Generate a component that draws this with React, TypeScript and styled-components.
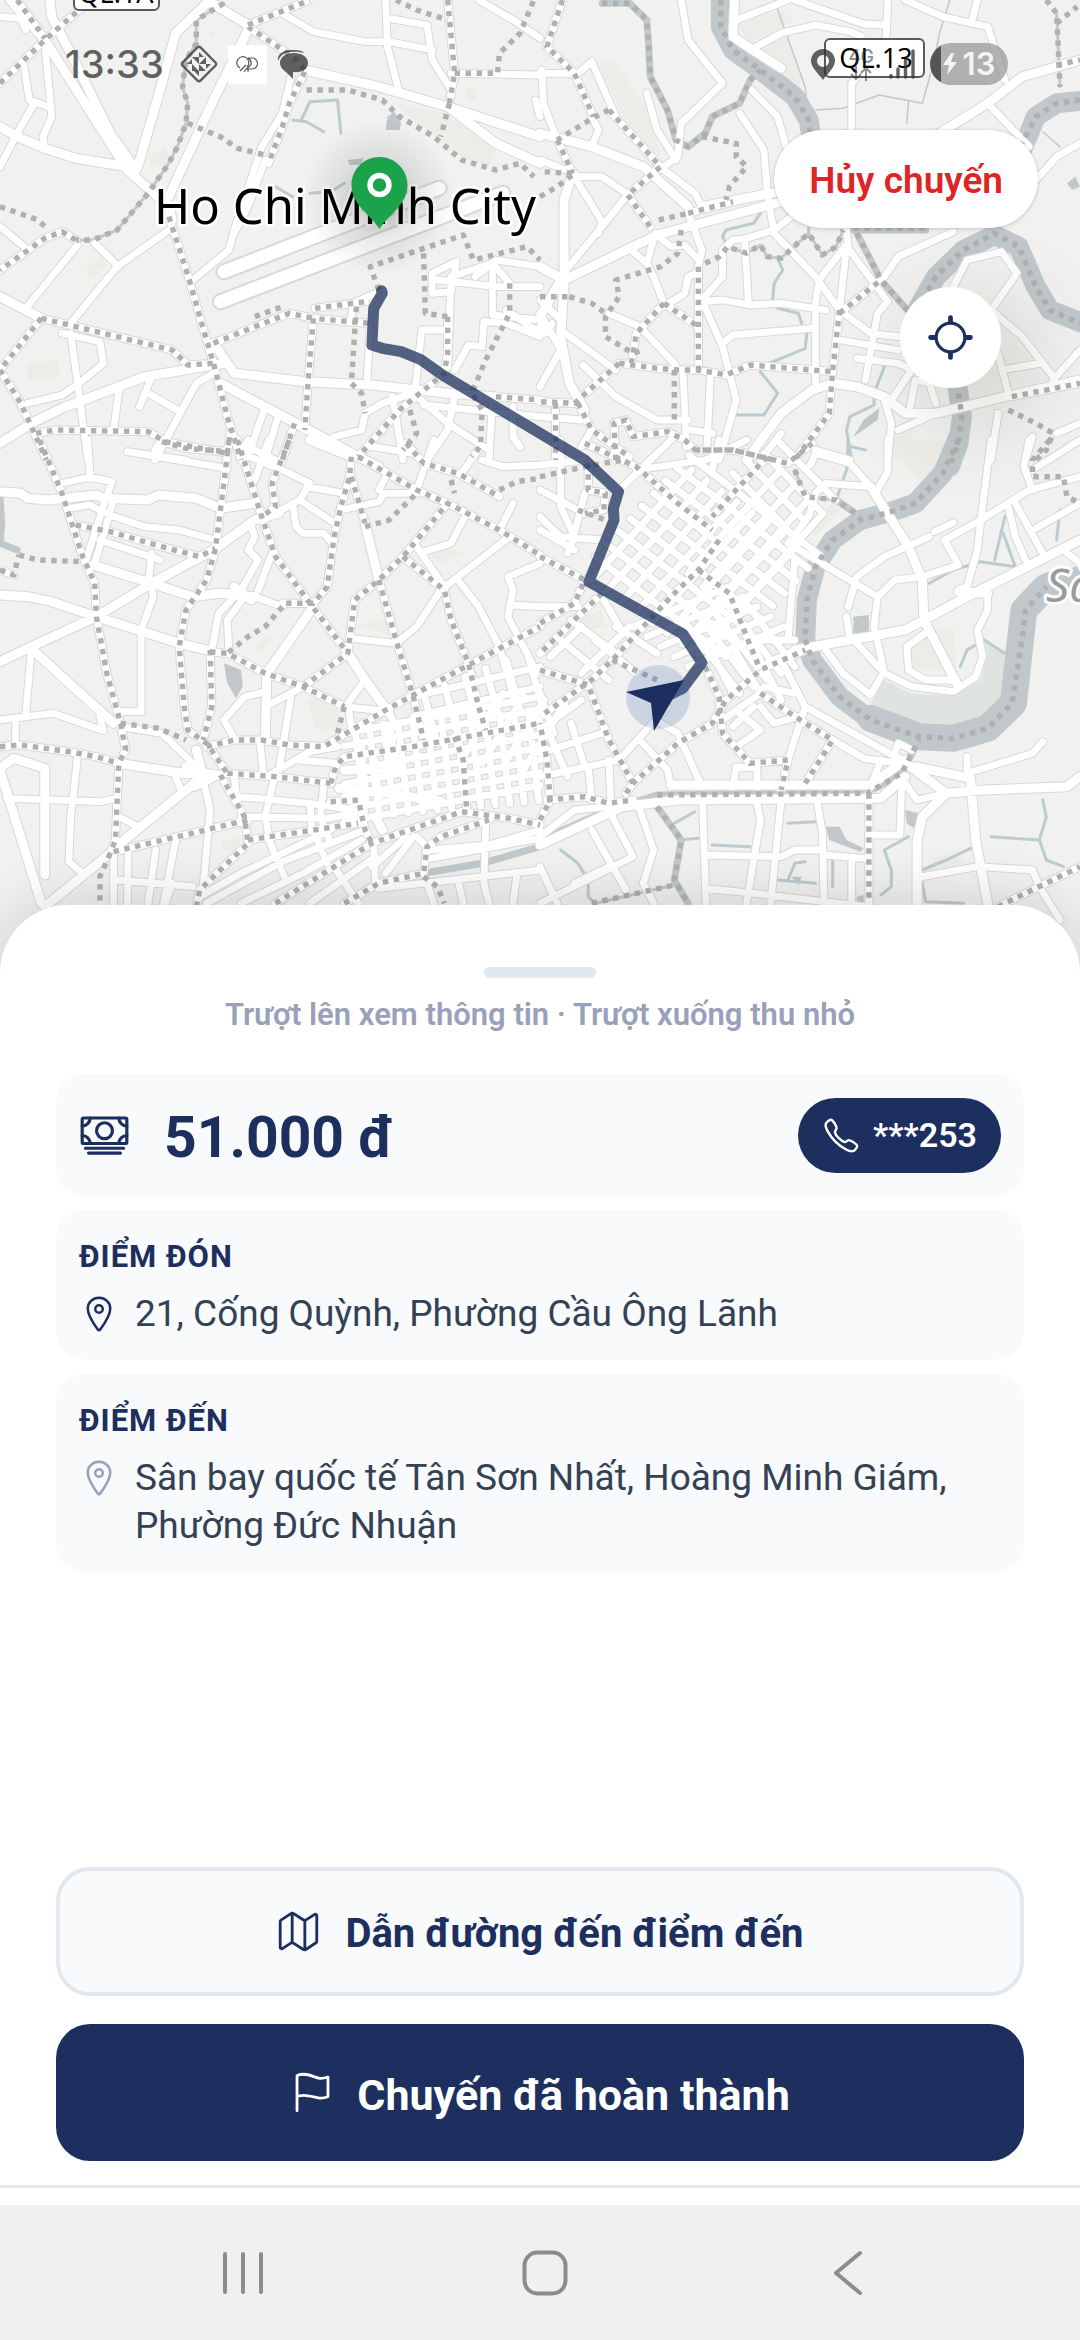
import React from "react";
import styled, { createGlobalStyle } from "styled-components";
import {
  IoCallOutline,
  IoCashOutline,
  IoFlagOutline,
  IoLocateOutline,
  IoLocationOutline,
  IoMapOutline,
} from "react-icons/io5";

const color = {
  navy: "#1c2f5e",
  text: "#334155",
  muted: "#98a1b9",
  card: "#f8fafc",
  line: "#e2e8f0",
  red: "#dc2626",
  green: "#1aa34a",
  water: "#c1c8cb",
  status: "rgba(48, 48, 48, 0.76)",
};

const GlobalStyle = createGlobalStyle`
  *, *::before, *::after { box-sizing: border-box; }
  body { margin: 0; background: #ffffff; font-family: Roboto, "Noto Sans", sans-serif; }
  button { font: inherit; border: 0; padding: 0; margin: 0; cursor: pointer; }
  h2, p { margin: 0; }
`;

/* ---------- map geometry ---------- */

type Tile = "nw" | "ne" | "sw" | "se";
const origin: Record<Tile, [number, number]> = {
  nw: [0, 0],
  ne: [540, 0],
  sw: [0, 440],
  se: [540, 440],
};
const SX = 540 / 1568;
const SY = 1 / 3;

/* Turns "x,y x,y; x,y x,y" in tile units into one SVG path in map units. */
function trace(tile: Tile, lines: string, close = false): string {
  const [ox, oy] = origin[tile];
  return lines
    .split(";")
    .map((line) => line.trim())
    .filter(Boolean)
    .map((line) => {
      const pts = line.split(/\s+/).map((p) => {
        const [x, y] = p.split(",").map(Number);
        return `${(ox + x * SX).toFixed(1)} ${(oy + y * SY).toFixed(1)}`;
      });
      return "M" + pts.join("L") + (close ? "Z" : "");
    })
    .join("");
}

/* Street blocks: two families of parallel lines. */
function comb(x: number, y: number, stepX: number, stepY: number, n: number, dx: number, dy: number): string {
  return Array.from({ length: n }, (_, i) => {
    const ax = x + stepX * i;
    const ay = y + stepY * i;
    return `${ax},${ay} ${ax + dx},${ay + dy}`;
  }).join(";");
}

const streets =
  trace("nw", `
  845,230 820,340 760,440 680,690 665,750 560,840; 770,480 720,620 680,700; 1120,0 1125,140 1160,280; 820,40 910,95 1060,125 1130,125 1255,150;
  1130,55 1240,75 1255,180 1310,270; 1390,0 1490,60 1568,115; 0,500 60,380 100,310; 70,200 85,300 140,320;
  130,130 150,350 125,410 130,445; 0,50 60,55 75,90; 490,690 340,800 205,970; 275,730 345,800; 225,735 75,925;
  0,680 70,740; 180,1000 290,1025 300,1090 230,1150 180,1185 80,1210; 205,1000 225,1150 255,1380;
  620,1120 570,1150 450,1380; 440,1130 405,1220; 430,1180 515,1230; 345,1170 330,1290; 370,1355 540,1380;
  1075,980 1065,1150; 1020,950 1025,910 1090,880; 770,1220 720,1370; 810,1240 770,1380; 1310,830 1300,1100; 1255,880 1310,875 1325,785 1255,820 1255,880;
  1270,840 1440,860 1568,860; 1325,825 1430,790 1480,850; 1380,830 1440,780 1568,800; 1430,800 1430,945 1568,960; 1225,990 1305,990; 1225,990 1205,1170;
  1320,1110 1360,1035 1400,1040 1405,965 1470,970 1568,1010; 1470,930 1568,1000; 1200,1180 1300,1270 1420,1350; 1140,1190 1170,1380;
  1200,1180 1110,1210 1060,1240 1050,1290 970,1310; 1320,1190 1300,1290 1240,1380; 1430,1200 1420,1380; 1490,1220 1490,1310 1510,1340; 1230,1215 1568,1250;
  1310,220 1568,225; 1555,300 1568,350; 1080,1340 1200,1360; 720,1340 800,1380`) +
  trace("ne", `
  410,0 430,120 530,250 450,330 410,370 400,470 345,510; 570,60 720,0; 740,0 940,72 1005,75; 1010,0 1005,112;
  610,150 700,100 800,75 900,95 935,110; 1060,0 1170,50 1300,80 1350,240; 1270,0 1255,60; 905,390 905,250 935,215;
  1300,310 1420,440; 1440,540 1500,470 1568,430; 310,280 340,390 395,480; 615,270 690,350 715,440; 580,340 650,450 660,580 680,700 800,830 870,930 960,1000 1040,1010;
  0,220 110,220 150,185 220,350; 5,210 10,310 50,420; 150,350 170,390 150,440; 340,510 250,590 180,680 75,810; 360,510 450,580 470,620; 0,480 100,520;
  100,530 180,665 170,700; 100,530 180,530 250,580; 0,940 60,1050 0,1160; 60,990 220,1110; 265,750 310,790 330,830 360,910; 310,790 335,700; 345,710 380,740 420,735 460,780;
  430,640 470,750 460,800; 460,815 430,830 420,880 360,920; 200,940 290,980 390,1090 400,1110; 530,830 470,900; 595,730 605,910; 530,830 530,750 560,720 600,715 680,690 730,650;
  890,690 895,745 1010,905 980,940 945,1140; 885,740 810,840 800,910 800,1150; 890,740 870,930; 1000,830 1040,770 1200,695; 470,905 530,900 610,915 700,910 830,930;
  470,900 530,1040 570,1200 520,1380; 530,1030 560,1005 790,985; 125,1095 220,1190 340,1260 430,1260; 415,1110 425,1340; 495,1120 485,1340; 440,1290 500,1300;
  870,1020 1040,1050; 920,1075 1040,1090 1080,1110 1020,1200; 1075,1220 1090,1140 1130,1150 1150,1210; 1000,1200 1020,1270 1010,1380; 1150,1240 1040,1290;
  1200,860 1240,780 1340,755 1385,820 1310,930; 1310,930 1400,1010 1490,1130; 1340,1110 1450,1090; 1490,1140 1568,1050; 1330,1060 1360,1180; 1330,1240 1310,1380;
  1500,1300 1568,1270; 1430,1310 1410,1380; 0,1250 120,1260; 150,1290 120,1340; 0,900 60,960; 0,980 15,1000 35,970; 640,1380 700,1300; 800,1350 900,1380`) +
  trace("sw", `
  255,0 262,115; 180,130 260,112 325,125 300,200 250,360; 330,180 275,370; 200,205 260,195 320,225 420,260 520,270 625,300;
  290,300 465,360; 440,340 430,440; 440,440 445,470 410,570 410,815 350,815; 90,640 75,820; 0,840 155,820 300,872 290,830; 45,840 45,910;
  350,860 470,880 550,960 590,1020; 225,950 215,1050 205,1130 200,1265 240,1300; 20,1075 290,1085 340,1075; 345,1130 400,1160; 370,35 660,85; 450,30 470,0;
  730,260 740,290 720,330 750,360 700,450 635,520 615,630; 790,340 750,450; 710,470 660,540 665,640; 700,40 820,90 900,130 870,180 800,220; 780,0 740,120; 720,0 700,40;
  890,140 1000,160; 850,190 860,260 880,280 940,280 965,310; 870,180 980,255; 740,470 820,500; 770,755 710,770 650,840 680,895; 770,800 880,740; 845,770 810,990; 755,910 765,1010;
  790,1000 900,935 980,920; 870,960 980,970; 590,1020 610,1110 590,1340; 690,1070 900,1090 1030,1110; 700,1130 950,1135 1030,1120; 795,1020 770,1130 785,1210 830,1320; 900,1090 905,1160 950,1270;
  680,1010 690,1090; 940,1040 930,1130 960,1210; 510,1010 525,1050; 990,210 1100,185 1115,160 1210,160; 1100,150 1120,110; 1330,420 1390,500 1450,620 1500,800; 1480,290 1280,450 1210,560 1150,610 1020,595;
  1210,320 1290,440; 1230,335 1310,310 1350,230; 1260,0 1210,150; 1490,190 1450,270; 1400,60 1460,80 1568,75; 1395,20 1340,100; 1568,370 1475,410 1490,450 1475,530 1560,700; 1480,495 1568,500;
  600,1390 820,1265 1060,1170; 580,1370 700,1300 960,1170; 700,1390 880,1300 1050,1200; 900,1390 1090,1250; 340,1320 560,1340; 330,1250 330,1390; 372,1240 370,1390; 452,1230 430,1390; 510,1200 475,1390; 500,1330 480,1390;
  970,1280 1040,1390; 1085,1220 1090,1330; 1080,1280 1180,1190; 1210,1190 1250,1230 1420,1215 1568,1170; 1120,1300 1200,1190; 1250,1255 1568,1195; 1410,1160 1405,1330 1420,1390; 1100,1345 1568,1290; 1240,1330 1260,1390; 1330,1320 1345,1390; 1500,1310 1490,1390;
  1060,720 1010,790 1020,860; 1000,800 1130,815; 1130,820 1160,880`) +
  trace("sw", comb(1000, 880, 0, 38, 8, 568, -110)) +
  trace("sw", comb(1200, 770, 0, 60, 2, 368, -90)) +
  trace("sw", comb(1030, 860, 42, -4, 13, 30, 270)) +
  trace("sw", comb(1230, 760, 60, -25, 6, 40, 150)) +
  trace("sw", comb(1340, 960, 60, 10, 4, 120, -200)) +
  trace("se", `
  980,470 720,310 780,230 800,160 830,130 960,140; 960,140 900,70 800,40 785,75; 980,150 1010,95 1010,0; 895,500 920,410 1000,350 1130,290; 1145,275 1200,248;
  980,470 970,560 1000,700; 980,470 1030,420 1110,410 1215,375 1175,300 1280,240 1420,150 1568,110; 1310,0 1280,240 1270,330 1240,440 1215,450; 1360,200 1380,290 1410,360; 1380,190 1460,340; 1420,0 1405,80 1430,150;
  890,530 900,600; 830,630 880,700 960,765 990,710; 920,610 1000,700 1080,740 1200,755 1265,710 1285,650 1270,570 1300,510 1300,460; 1130,570 1065,620 1070,690 1120,720 1210,720; 1440,265 1568,190; 1430,90 1568,0; 1520,330 1568,370;
  700,660 770,800 1050,960; 770,800 720,960; 850,900 940,955 1050,970; 960,1040 990,960; 1050,1040 1045,1185 960,1185; 1060,1030 1095,1080 1180,1060; 1030,940 1040,910 1080,930;
  1240,950 1240,1000 1430,940 1460,905; 1110,1310 1270,1280 1430,1290 1450,1340 1510,1440; 472,1090 482,1390; 630,1090 640,1140 600,1390; 700,1080 670,1390; 805,1085 820,1180 825,1390; 905,1260 905,1390; 480,1245 700,1250 740,1230 820,1230 825,1245 940,1255;
  0,1390 60,1360 270,1250 210,1130; 150,1170 250,1350; 290,1110 330,1230 300,1330 330,1390; 0,1280 50,1390; 0,1190 100,1110 200,1100; 480,1345 620,1360 950,1400; 200,1280 100,1330;
  380,1040 370,990 290,900; 470,1040 400,880 350,850; 560,1040 570,980 630,985 630,1040; 230,960 370,800; 0,1010 230,960; 140,980 150,1080; 200,960 205,1070; 0,940 180,880; 0,870 120,780; 160,600 280,700; 30,890 80,1010; 90,850 130,980; 0,760 40,880;
  60,0 60,200 100,290 80,340; 0,75 130,60; 0,150 110,210; 0,230 60,290 180,300; 0,270 100,330; 280,90 480,60 600,0; 240,140 380,0; 520,0 500,90; 100,280 130,160; 0,500 110,500; 60,600 200,720; 30,650 120,560; 90,540 220,640; 180,470 230,560; 220,560 340,640; 120,700 260,560;
  640,680 720,640 770,620; 560,620 640,760; 600,580 700,780; 640,600 740,600; 500,640 560,760; 530,840 640,760; 560,860 620,800; 570,920 640,870; 640,870 580,820; 640,800 680,850 750,830; 650,740 740,760; 740,360 720,600`) +
  trace("se", comb(150, 420, 44, 32, 8, 290, -330)) +
  trace("se", comb(430, 400, 44, 40, 4, 260, -300)) +
  trace("se", comb(160, 350, 34, -38, 9, 380, 300)) +
  trace("se", comb(560, 100, 46, -30, 4, 160, 170)) +
  trace("se", comb(270, 560, 40, 30, 5, 280, -120)) +
  trace("se", comb(430, 560, 40, -20, 5, 150, 200));

const avenues =
  trace("nw", `
  30,0 130,120 370,510 490,620 500,660; 145,0 150,50 220,190 320,400 395,510; 610,0 510,100 470,250 400,500; 600,0 720,75; 720,90 620,300 490,590;
  885,210 1100,260 1300,320 1568,410; 1300,320 1440,430 1568,490; 0,380 50,410 130,445 220,475 370,500; 0,890 120,955; 0,1330 100,1265 180,1225 420,1130 650,1090;
  620,1030 680,1120 890,1145 1080,1155 1300,1180 1440,1190; 640,1150 860,1270 1040,1370 1100,1400`) +
  trace("ne", `
  565,0 560,110 610,145 700,205; 1160,400 1300,310 1400,230 1568,180; 0,400 150,440 300,500 430,620; 95,520 70,600 70,850 60,1010 85,1150 130,1230; 0,800 60,835;
  60,845 340,705 720,600; 470,620 720,570; 60,840 0,950; 600,1380 700,1240 790,1170 850,1150 920,1160 1000,1190 1060,1240 1150,1240 1350,1190 1568,1140`) +
  trace("sw", `
  0,155 60,160 80,175 140,180 280,165 300,175 430,180 460,165 570,175 640,205 740,190; 270,375 440,430 560,470 640,460 740,470; 0,665 90,620 280,530 440,430 620,330 740,240 810,220;
  0,465 80,470 150,485 280,530 520,610 600,630; 90,625 330,850; 345,970 530,1000 640,1005; 0,985 40,955 130,985 130,1305; 0,990 120,1390; 600,1000 350,1210; 320,1240 130,1400; 540,980 620,1010 560,1040; 570,930 590,1010;
  910,500 775,700 770,900; 1010,640 1060,720 1130,820; 1060,250 1100,420; 680,440 730,480; 1020,50 900,0;
  985,1045 1130,1060 1280,1085; 1045,910 1060,1080; 1085,960 1100,1090; 1000,990 1160,985; 1090,1130 1110,1170; 1130,870 1145,960`) +
  trace("se", `
  740,630 900,600 1060,570 1240,470 1568,300; 960,140 1070,320 1110,420 1115,540 1215,740; 380,1035 960,1035 1060,960; 0,1215 240,1100 400,1080 990,1075 1060,1010; 1050,960 1180,1060 1290,1050 1530,1040 1568,1010;
  1180,1060 1110,1130 1095,1200 1095,1390; 1090,980 1250,1015 1265,1200 1300,1390; 1215,455 1300,460`);

/* District boundaries that run along a street. */
const borderStreets =
  trace("nw", `
  50,0 130,115; 0,250 130,120 240,20; 720,80 850,170 885,210; 720,75 900,0; 885,215 840,310 820,380 780,490; 490,650 550,840 580,950 620,1090 660,1250 700,1380;
  220,720 180,695 130,715 0,810; 120,955 500,1050 545,1095 620,1090; 120,955 0,1110 60,1210 100,1300 135,1380; 105,1300 160,1290 430,1295 480,1325 660,1360; 620,1030 740,980 840,940 910,955;
  910,955 895,1140 885,1290; 855,1270 820,1380; 915,925 1060,905; 1300,0 1320,220 1305,310; 1440,1190 1568,1200; 1300,950 1300,1060 1290,1120 1160,1230 1040,1370; 660,1360 670,1290; 1070,970 910,955`) +
  trace("ne", `
  65,0 20,140 100,220 155,350; 200,330 350,500 255,585; 50,420 95,520; 460,800 460,1110; 870,940 990,840; 870,930 850,1110 840,1240 790,1310 740,1380; 230,1090 100,1210 0,1205; 230,1090 340,1105 400,1110 460,1110 540,1125 610,1095 850,1115;
  1370,1190 1568,1150; 220,1380 215,1270 250,1260 270,1310 370,1295 420,1320 450,1350 560,1350 680,1380; 45,1210 45,1380; 110,1210 150,1290 260,1370; 255,585 320,680; 360,910 280,1000 265,1090; 360,910 460,980; 430,640 560,605; 1500,195 1568,180`) +
  trace("sw", `
  115,0 180,160 240,350 275,430 280,530 310,700 350,850 365,930 345,970 335,1200 320,1240; 220,255 320,275 470,320 580,350 625,325; 0,920 60,915 200,935 280,950 345,970; 665,0 650,130 625,330 600,420 540,510 520,620 535,800 545,870 600,910 660,1000;
  610,630 615,800 590,900; 470,5 540,25 660,35; 690,0 760,230 800,350 900,490 1010,640; 840,0 790,130 800,200 760,230; 1020,50 1015,110 990,200 970,290 950,440 910,490 820,490; 1020,110 1060,250;
  610,635 660,640 770,700 880,740 1000,800; 880,740 1010,640 1030,480 1100,420 1170,350 1300,190; 600,920 680,900 760,900 840,915 940,920 1120,810 1370,670 1568,560; 660,1000 800,1010 960,1030;
  640,1005 710,1130 720,1210 580,1350 570,1400; 330,1235 720,1140; 720,1200 1040,1150; 960,1030 975,980 1000,950 1200,920 1568,850; 960,1085 1040,1080 1060,1170 1080,1210; 800,1390 1080,1210 1340,1115 1480,1135 1568,1155;
  1000,1390 1100,1330 1230,1300 1240,1220 1280,1190 1420,1140; 1100,420 1150,600 1200,770 1230,900; 1040,50 1210,150 1300,190 1450,270 1568,345; 1170,350 1290,450 1310,540 1360,670 1390,800 1410,870; 1320,890 1345,960 1355,1110; 1180,10 1230,70 1330,100 1450,170; 0,390 40,405`) +
  trace("se", `
  130,10 280,80 400,190 500,270; 450,30 560,30 720,70 790,10; 660,50 560,160 500,230; 520,300 460,390 380,470 210,660 150,720 0,830; 460,390 550,460 600,590 640,690; 0,350 130,420 100,490 0,550; 180,460 0,640;
  0,690 140,735 200,900 270,1030; 250,1060 270,1030 400,910 500,850 540,780 640,690 770,630; 640,760 770,850 850,900 770,1030; 480,680 520,770 530,880 610,970 720,960 700,1050; 955,1060 955,1390; 20,1080 130,1070 200,1090 270,1080;
  0,1140 30,1080 20,960 0,850; 1330,1400 1568,1280; 140,70 140,150 190,160 185,210 130,220`);

/* District boundaries on open ground or along water. */
const borders =
  trace("nw", `
  650,10 570,60 570,130 540,180 530,260 545,310 540,370 515,440 490,490 430,580 340,690 270,720 220,720; 0,620 70,645 110,660 140,690; 545,370 640,410 690,445 770,465; 890,270 1010,270 1110,300 1160,350 1260,410 1340,480 1440,510 1510,490 1550,530;
  1305,310 1280,410; 1320,220 1445,220 1450,160 1510,100 1550,0; 1150,0 1210,30 1300,60; 740,950 820,920; 1100,870 1075,800 1345,705 1375,780 1530,740 1568,780; 1230,760 1235,940 1300,950; 1035,920 1020,1150 1050,1180 1060,1240; 1480,850 1480,940 1410,1080 1370,1180 1400,1230 1395,1340 1370,1370; 1190,1230 1210,1300 1170,1350`) +
  trace("ne", `
  180,10 260,10 310,60 315,130 320,230 370,330 395,420 430,440 480,400 500,350 580,310 610,240 640,210; 470,410 570,430 570,470 600,500 550,560 540,600; 525,0 525,80 560,150 640,210 740,290 780,360 785,400; 200,330 160,350 50,420; 0,590 50,560 100,520 0,515;
  410,690 400,760 350,800 220,840 230,890 190,950 190,1010 270,1060 300,1050; 345,660 430,640; 85,890 150,910 190,940; 0,890 90,890; 390,1110 390,1270; 480,790 520,770 545,740 600,760 640,735 660,770 700,775 780,700 820,765 860,740 880,690; 920,700 990,840 1075,940;
  1568,300 1500,310 1440,350 1400,430; 1110,900 1150,830 1230,750 1320,700 1390,740 1440,860 1480,930 1568,970; 1215,1180 1225,1250 1215,1330 1190,1400; 1470,0 1500,40 1510,260; 1500,70 1560,20; 1360,1230 1440,1270 1490,1300 1470,1350 1440,1380; 910,685 1120,685`) +
  trace("sw", `
  55,345 110,360 240,365; 0,390 40,405 55,345; 320,1240 290,1310 290,1390; 350,850 460,865 540,900; 820,500 770,560 720,590 660,640; 1000,800 980,880; 1060,260 1130,240 1210,160; 1230,1310 1270,1340 1290,1390; 1310,120 1320,160; 1450,150 1500,125 1568,115`) +
  trace("se", `
  1215,0 1170,100 1090,190 1020,215 930,240 850,300 800,380 775,480 770,600 790,660 870,770 960,840 1100,890 1200,895 1300,865 1370,790 1400,600 1410,510 1470,440; 740,90 770,170 860,180 930,230; 340,1065 950,1060 1050,1000 1100,900; 340,1100 410,1200 390,1320 430,1390; 150,1390 390,1335;
  210,660 340,720; 1480,0 1430,60 1430,110 1520,110 1530,170 1568,190; 0,110 130,80 240,60; 110,210 190,240`);

const bigRiver =
  trace("ne", "525,-20 525,80 560,150 640,210 740,290 780,360 790,420; 1600,300 1500,310 1440,350 1400,450; 1095,930 1150,830 1230,750 1320,705 1390,740 1440,860 1480,930 1590,975; 1190,1000 1215,1180 1225,1250 1215,1330 1190,1400") +
  trace("se", "1215,-10 1170,100 1090,190 1020,215 930,240 850,300 800,380 775,480 770,600 790,660 870,770 960,840 1100,890 1200,895 1300,865 1370,790 1400,600 1410,510 1470,440 1590,400");
const wideBend = trace("se", "960,835 1100,890 1200,895 1300,865 1375,790 1395,600 1405,510 1470,440 1500,430");
const creeks =
  trace("ne", "180,10 260,10 310,60 315,130 320,230 370,330 395,420 430,440 480,400 500,350 580,310 610,240 640,210; 920,700 990,840 1075,940; 910,690 1120,690") +
  trace("se", "0,1200 200,1110 340,1065 950,1058 1050,1000 1100,900; 340,1100 410,1200 390,1320 430,1390; 860,180 930,230") +
  trace("sw", "1230,1300 1400,1270 1568,1220; 0,170 5,250 0,310 50,330");
const streams =
  trace("nw", "650,10 570,60 570,130 540,180 530,260 545,310 540,370 515,440 490,490 430,580 340,690 270,720 220,720; 875,360 900,305 980,300 990,400; 850,360 890,365 940,395; 800,560 850,590; 900,580 960,575 1000,550") +
  trace("ne", "640,640 620,670 540,690 530,710 545,740 600,760 640,735 660,770 700,775 780,700 820,765 860,740 880,690; 690,775 705,810 680,850 675,900; 690,925 750,940 760,970; 775,1000 770,1045 665,1090; 640,1115 690,1180 650,1245 560,1245; 1000,1100 970,1180 970,1215 900,1250 890,1290 905,1380; 905,1340 945,1350; 1500,40 1510,260; 780,685 780,710") +
  trace("se", "740,90 770,170 860,180 890,90 895,0; 60,1230 110,1270 140,1320 140,1370 160,1390 390,1335; 1460,1080 1470,1130 1450,1200 1310,1190; 1450,1200 1470,1260 1520,1280; 1070,1190 1000,1230 1020,1290 1020,1340 990,1365; 850,1260 850,1340; 720,1320 740,1270 770,1265; 690,1320 800,1330; 720,1150 800,1145; 1130,430 1200,390 1280,365 1380,380; 1350,230 1320,360; 1345,280 1380,380; 1510,210 1500,300; 390,1150 450,1115; 400,1200 460,1195; 1110,1330 1120,1385 1230,1390; 1290,600 1350,640; 1220,680 1240,630 1290,600; 1110,1290 1180,1260 1250,1225; 500,1215 610,1220");
const threads = trace("ne", "800,330 880,325 985,285 1110,310 1140,200 1160,100 1190,0; 680,0 770,260 775,320; 1070,305 1065,370; 1460,395 1510,440");
const ponds =
  trace("nw", "1125,350 1145,335 1165,370 1160,390 1120,390; 1010,480 1055,475 1050,495 1015,495", true) +
  trace("sw", "650,670 700,690 705,740 685,775 660,730", true) +
  trace("ne", "940,1260 985,1225 980,1260 910,1310; 1530,550 1555,530 1568,560 1545,570", true) +
  trace("se", "910,530 955,525 955,580 910,580; 1060,1110 1100,1120 1085,1165 1065,1150; 830,1160 870,1160 890,1200 940,1225 930,1235 840,1200; 920,1370 940,1365 940,1390 920,1390; 730,1310 760,1310 750,1335; 1500,385 1568,385 1568,430 1500,440", true);
const wetland = trace("se", "1290,605 1350,640 1345,790 1300,845 1190,855 1080,850 960,790 1000,720 1080,762 1200,765 1280,720 1300,640", true);
const parks =
  trace("nw", "1150,310 1290,340 1440,450 1420,500 1340,470 1200,360; 80,1090 170,1080 175,1130 80,1140; 250,800 300,770 305,800 260,840; 430,470 480,440 500,490 440,500; 600,90 635,100 615,115; 1355,260 1380,265 1380,300 1355,300", true) +
  trace("ne", "570,70 700,30 740,60 610,130; 170,190 220,180 310,330 350,470 260,390; 640,130 720,110 770,260 700,240; 1020,1320 1080,1280 1080,1380 1020,1380", true) +
  trace("sw", "890,780 960,760 1000,860 920,870; 1040,560 1140,530 1150,590; 740,620 770,590 790,600 760,640; 640,1200 700,1195 690,1230 650,1230; 1250,350 1290,320 1340,340 1280,370", true) +
  trace("se", "1040,0 1200,0 1150,110 1110,130 1060,80; 110,530 180,510 190,560 130,570; 1070,600 1200,560 1210,700 1080,680; 1110,1290 1170,1240 1240,1260 1200,1290; 780,260 850,190 870,210 800,290", true);
const runways = trace("nw", "650,815 1275,565; 640,905 1460,580");
const trip =
  trace("nw", "1108,872 1110,880 1085,925 1080,1035 1110,1045 1165,1055 1220,1078 1285,1125 1568,1300") +
  trace("se", "0,-20 130,60 228,155 213,205 215,240 142,425 415,582 470,668 415,745 345,780").replace("M", "L");

/* ---------- styled parts ---------- */

const Screen = styled.main`
  display: grid;
  grid-template-rows: 181fr 287fr;
  min-height: 100vh;
`;

const MapArea = styled.section`
  position: relative;
  background: #f1f1f0;
`;

const MapCanvas = styled.svg`
  position: absolute;
  inset: 0 0 -80px;
  width: 100%;
  height: calc(100% + 80px);
  overflow: hidden;

  path { fill: none; stroke-linejoin: round; stroke-linecap: round; }
  text { font-family: "Noto Sans", sans-serif; }
`;

const MapOverlay = styled.div`
  position: relative;
  display: flex;
  flex-direction: column;
`;

const StatusBar = styled.header`
  display: flex;
  justify-content: space-between;
  align-items: center;
  height: 130px;
  padding: 0 72px 2px 65px;
  color: ${color.status};
`;

const StatusGroup = styled.div<{ $gap: number }>`
  display: flex;
  align-items: center;
  gap: ${(p) => p.$gap}px;
`;

const Clock = styled.time`
  font: 500 38px/44px Inter, sans-serif;
  margin-right: 6px;
`;

const Network = styled.span`
  display: grid;
  justify-items: center;
  font: 600 18px/18px Inter, sans-serif;
  opacity: 0.7;
`;

const Battery = styled.span`
  display: flex;
  align-items: center;
  justify-content: center;
  gap: 6px;
  width: 78px;
  height: 42px;
  border-radius: 21px;
  color: #f4f4f4;
  font: 600 31px/42px Inter, sans-serif;
  background: linear-gradient(90deg, #555555 0 11px, rgba(150, 150, 150, 0.72) 11px);
`;

const MapControls = styled.div`
  display: flex;
  flex-direction: column;
  align-items: flex-end;
  gap: 59px;
  padding-right: 42px;
`;

const CancelButton = styled.button`
  height: 98px;
  padding: 4px 35px 0;
  border-radius: 49px;
  background: #ffffff;
  color: ${color.red};
  font-size: 37px;
  line-height: 48px;
  font-weight: 600;
  box-shadow: 0 0 3px rgba(0, 0, 0, 0.2), 0 3px 5px rgba(0, 0, 0, 0.06);
`;

const LocateButton = styled.button`
  display: grid;
  place-items: center;
  width: 101px;
  height: 101px;
  margin-right: 37px;
  border-radius: 50%;
  background: #ffffff;
  color: ${color.navy};
  font-size: 51px;
  box-shadow: 24px 24px 90px rgba(60, 60, 40, 0.26);
`;

const Panel = styled.section`
  position: relative;
  display: flex;
  flex-direction: column;
`;

const Sheet = styled.div`
  flex: 1;
  display: flex;
  flex-direction: column;
  padding: 62px 56px 24px;
  border-radius: 68px 68px 0 0;
  background: #ffffff;
  box-shadow: 0 -6px 56px rgba(0, 0, 0, 0.14);
`;

const Handle = styled.div`
  align-self: center;
  width: 112px;
  height: 11px;
  border-radius: 6px;
  background: #e0e8f0;
`;

const Hint = styled.p`
  margin: 19px 0 41px;
  color: ${color.muted};
  font-size: 31px;
  line-height: 36px;
  font-weight: 600;
  text-align: center;
`;

const Cards = styled.div`
  display: grid;
  gap: 14px;
`;

const Card = styled.article`
  padding: 22px 23px;
  border-radius: 28px;
  background: ${color.card};
`;

const FareCard = styled(Card)`
  display: flex;
  align-items: center;
  gap: 34px;
  min-height: 122px;
  color: ${color.navy};
  font-size: 51px;
`;

const Fare = styled.strong`
  flex: 1;
  padding-top: 6px;
  font-size: 57px;
  line-height: 66px;
  font-weight: 700;
`;

const CallButton = styled.a`
  display: flex;
  align-items: center;
  gap: 12px;
  height: 75px;
  padding: 0 24px;
  border-radius: 38px;
  background: ${color.navy};
  color: #ffffff;
  font-size: 34px;
  line-height: 40px;
  font-weight: 600;
  text-decoration: none;

  svg { font-size: 39px; }
`;

const CardTitle = styled.h2`
  padding-top: 2px;
  color: ${color.navy};
  font-size: 31px;
  line-height: 45px;
  font-weight: 700;
  letter-spacing: 1px;
`;

const Place = styled.div<{ $pin: string }>`
  display: grid;
  grid-template-columns: 40px 1fr;
  gap: 16px;
  margin-top: 11px;
  color: ${color.text};
  font-size: 37px;
  line-height: 48px;

  svg {
    margin-top: 4px;
    color: ${(p) => p.$pin};
    font-size: 40px;
  }
`;

const Actions = styled.div`
  display: grid;
  gap: 28px;
  margin-top: auto;
`;

const ActionButton = styled.button<{ $solid?: boolean }>`
  display: flex;
  align-items: center;
  justify-content: center;
  gap: ${(p) => (p.$solid ? 22 : 24)}px;
  min-height: ${(p) => (p.$solid ? 137 : 129)}px;
  border: ${(p) => (p.$solid ? "0" : `4px solid ${color.line}`)};
  border-radius: 34px;
  background: ${(p) => (p.$solid ? color.navy : color.card)};
  color: ${(p) => (p.$solid ? "#ffffff" : color.navy)};
  font-size: ${(p) => (p.$solid ? 43 : 40)}px;
  line-height: 50px;
  font-weight: 700;

  svg { font-size: 45px; }
  span { padding-top: 4px; }
`;

const Footer = styled.div`
  height: 20px;
  border-top: 3px solid ${color.line};
  background: #ffffff;
`;

const SystemNav = styled.nav`
  display: grid;
  grid-template-columns: repeat(3, 1fr);
  height: 135px;
  padding: 0 81px 0 92px;
  background: #f0f0f2;
`;

const NavButton = styled.button`
  display: grid;
  place-items: center;
  background: transparent;
  color: #8c8c8c;
`;

/* ---------- map ---------- */

const CityMap = () => (
  <MapCanvas viewBox="0 0 1080 985" preserveAspectRatio="xMidYMin slice" role="img" aria-label="Ho Chi Minh City">
    <defs>
      <radialGradient id="pinShade">
        <stop offset="0" stopColor="#000" stopOpacity="0.3" />
        <stop offset="0.5" stopColor="#000" stopOpacity="0.09" />
        <stop offset="1" stopColor="#000" stopOpacity="0" />
      </radialGradient>
    </defs>
    <rect width="1080" height="985" fill="#f1f1f0" />
    <path d={parks} style={{ fill: "#ecede8" }} />
    <path d={wetland} style={{ fill: "#dfe4e0" }} />
    <path d={ponds} style={{ fill: color.water }} />
    <g stroke={color.water}>
      <path d={bigRiver} strokeWidth="20" />
      <path d={wideBend} strokeWidth="27" />
      <path d={creeks} strokeWidth="7" />
      <path d={streams} strokeWidth="3" stroke="#bccbd0" />
      <path d={threads} strokeWidth="1.5" />
    </g>
    <g stroke="#d8d8d8">
      <path d={runways} strokeWidth="17" />
      <path d={streets} strokeWidth="8.8" />
      <path d={borderStreets} strokeWidth="9.2" />
      <path d={avenues} strokeWidth="11" />
    </g>
    <g stroke="#ffffff">
      <path d={runways} strokeWidth="13" />
      <path d={streets} strokeWidth="6.8" />
      <path d={borderStreets} strokeWidth="7.2" />
      <path d={avenues} strokeWidth="9" />
    </g>
    <g stroke="#b0b0b0" strokeWidth="5.4" strokeDasharray="5.4 5.6">
      <path d={borderStreets} style={{ strokeLinecap: "butt" }} />
      <path d={borders} style={{ strokeLinecap: "butt" }} />
    </g>

    <g stroke="#ffffff" strokeLinejoin="round" paintOrder="stroke">
      <text x="345" y="224" fontSize="49" textAnchor="middle" strokeWidth="5" fill="#000">Ho Chi Minh City</text>
      <text x="1046" y="602" fontSize="46" fontStyle="italic" strokeWidth="6" fill="#9b9b9b">Sài Gòn</text>
    </g>
    <g fill="#ffffff" stroke="#5a5a5a" strokeWidth="2">
      <rect x="74" y="-28" width="85" height="38" rx="5" />
      <rect x="825" y="39" width="99" height="38" rx="5" />
    </g>
    <text x="116" y="3" fontSize="27" textAnchor="middle">QL.1A</text>
    <text x="876" y="68" fontSize="27" textAnchor="middle">QL.13</text>

    <path d={trip} stroke={color.navy} strokeOpacity="0.75" strokeWidth="11" />
    <circle cx="658" cy="697" r="32" fill="#3d5fb0" fillOpacity="0.2" />
    <path d="M626 692L684 680L654 731L651 703Z" style={{ fill: color.navy }} />

    <ellipse cx="379" cy="198" rx="76" ry="78" fill="url(#pinShade)" />
    <path
      d="M379.500 157C364 157 351.500 169.500 351.500 185C351.500 205 370 214 379.500 229C389 214 407.500 205 407.500 185C407.500 169.500 395 157 379.500 157Z"
      style={{ fill: color.green }}
    />
    <circle cx="379.500" cy="185" r="9.500" fill="none" stroke="#ffffff" strokeWidth="5.500" />
  </MapCanvas>
);

const StatusIcons = () => (
  <>
    <svg width="38" height="38" viewBox="0 0 38 38" fill="none" stroke="currentColor" strokeWidth="2.400" aria-hidden="true">
      <path d="M17.500 2.500Q19 1.200 20.500 2.500L35.500 17.500Q36.800 19 35.500 20.500L20.500 35.500Q19 36.800 17.500 35.500L2.500 20.500Q1.200 19 2.500 17.500Z" />
      <path d="M12 12L19 12L19 19ZM19 7L19 12L24 12ZM26 12V19H19ZM7 19H12V14ZM12 19V26H19ZM19 19L26 26H19ZM26 24V19H31ZM19 31V26H14Z" fill="currentColor" stroke="none" />
    </svg>
    <svg width="39" height="39" viewBox="0 0 39 39" fill="none" stroke="#555555" strokeWidth="1.200" aria-hidden="true">
      <rect width="39" height="39" fill="#ffffff" stroke="none" />
      <path d="M12 23A6 6 0 1 1 19 22M20 13H24A5.500 5.500 0 0 1 24 24H19L23 19.500A6 6 0 0 0 20 13M12 26L18 20M16 27L19 23M20 27V24" />
    </svg>
    <svg width="32" height="31" viewBox="0 0 32 31" fill="currentColor" aria-hidden="true">
      <path d="M1 12C0 5 6 1 14 1C20 1 25 1 27 4C20 2 9 2 5 6C3 8 2 10 1 12Z" />
      <path d="M17 4C9 4 3 8 3 14C3 18 6 21 9 23L16 30V23C25 24 31 20 31 14C31 8 25 4 17 4Z" />
    </svg>
  </>
);

const SignalIcons = () => (
  <>
    <svg width="24" height="31" viewBox="0 0 24 31" aria-hidden="true">
      <path fill="currentColor" fillRule="evenodd" d="M12 0A12 12 0 0 1 24 12C24 19 15 26 12 31C9 26 0 19 0 12A12 12 0 0 1 12 0ZM12 6A6 6 0 1 0 12 18A6 6 0 1 0 12 6Z" />
    </svg>
    <Network>
      4G
      <svg width="22" height="15" viewBox="0 0 22 15" fill="none" stroke="currentColor" strokeWidth="2" aria-hidden="true">
        <path d="M6 0V13M1 8L6 13L11 8M16 15V2M11 7L16 2L21 7" />
      </svg>
    </Network>
    <svg width="28" height="30" viewBox="0 0 28 30" stroke="currentColor" strokeWidth="3.400" strokeLinecap="round" aria-hidden="true">
      <path d="M3 26.500V28M10 20V28M17.500 11V28M25 2V28" />
    </svg>
  </>
);

export default function App() {
  return (
    <>
      <GlobalStyle />
      <Screen>
        <MapArea>
          <CityMap />
          <MapOverlay>
            <StatusBar>
              <StatusGroup $gap={10}>
                <Clock>13:33</Clock>
                <StatusIcons />
              </StatusGroup>
              <StatusGroup $gap={14}>
                <SignalIcons />
                <Battery>
                  <svg width="14" height="22" viewBox="0 0 14 22" fill="currentColor" aria-hidden="true">
                    <path d="M8 0L0 12H6L4 22L14 9H8L11 0Z" />
                  </svg>
                  13
                </Battery>
              </StatusGroup>
            </StatusBar>
            <MapControls>
              <CancelButton type="button">Hủy chuyến</CancelButton>
              <LocateButton type="button" aria-label="Vị trí của tôi">
                <IoLocateOutline />
              </LocateButton>
            </MapControls>
          </MapOverlay>
        </MapArea>

        <Panel>
          <Sheet>
            <Handle />
            <Hint>Trượt lên xem thông tin · Trượt xuống thu nhỏ</Hint>
            <Cards>
              <FareCard>
                <IoCashOutline />
                <Fare>51.000 đ</Fare>
                <CallButton href="tel:253">
                  <IoCallOutline />
                  ***253
                </CallButton>
              </FareCard>
              <Card>
                <CardTitle>ĐIỂM ĐÓN</CardTitle>
                <Place $pin={color.navy}>
                  <IoLocationOutline />
                  <p>21, Cống Quỳnh, Phường Cầu Ông Lãnh</p>
                </Place>
              </Card>
              <Card>
                <CardTitle>ĐIỂM ĐẾN</CardTitle>
                <Place $pin="#94a3b8">
                  <IoLocationOutline />
                  <p>Sân bay quốc tế Tân Sơn Nhất, Hoàng Minh Giám, Phường Đức Nhuận</p>
                </Place>
              </Card>
            </Cards>
            <Actions>
              <ActionButton type="button">
                <IoMapOutline />
                <span>Dẫn đường đến điểm đến</span>
              </ActionButton>
              <ActionButton type="button" $solid>
                <IoFlagOutline />
                <span>Chuyến đã hoàn thành</span>
              </ActionButton>
            </Actions>
          </Sheet>
          <Footer />
          <SystemNav>
            <NavButton type="button" aria-label="Recents">
              <svg width="42" height="44" viewBox="0 0 42 44" stroke="currentColor" strokeWidth="4" strokeLinecap="round">
                <path d="M3 3V41M21 3V41M39 3V41" />
              </svg>
            </NavButton>
            <NavButton type="button" aria-label="Home">
              <svg width="46" height="46" viewBox="0 0 46 46" fill="none" stroke="currentColor" strokeWidth="4">
                <rect x="2.500" y="2.500" width="41" height="41" rx="13" />
              </svg>
            </NavButton>
            <NavButton type="button" aria-label="Back">
              <svg width="30" height="46" viewBox="0 0 30 46" fill="none" stroke="currentColor" strokeWidth="4" strokeLinecap="round" strokeLinejoin="round">
                <path d="M27 3L3 23L27 43" />
              </svg>
            </NavButton>
          </SystemNav>
        </Panel>
      </Screen>
    </>
  );
}
